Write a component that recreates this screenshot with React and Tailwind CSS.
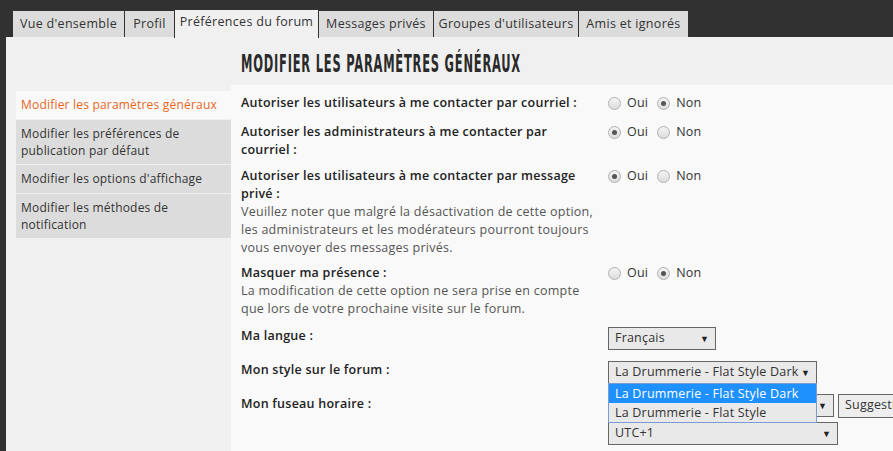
import React from 'react';

const tabs = [
	{ label: "Vue d'ensemble", w: 'w-[113px]' },
	{ label: 'Profil', w: 'w-[51px]' },
	{ label: 'Préférences du forum', w: 'w-[145px]', active: true },
	{ label: 'Messages privés', w: 'w-[116px]' },
	{ label: "Groupes d'utilisateurs", w: 'w-[146px]' },
	{ label: 'Amis et ignorés', w: 'w-[111px]' },
];

const menu = [
	{ label: 'Modifier les paramètres généraux', active: true },
	{ label: 'Modifier les préférences de publication par défaut' },
	{ label: "Modifier les options d'affichage" },
	{ label: 'Modifier les méthodes de notification' },
];

const Radio = ({ checked }) => (
	<span className="w-[13px] h-[13px] rounded-full border border-[#b0b0b0] bg-gradient-to-b from-[#f4f4f4] to-[#dcdcdc] flex items-center justify-center">
		{checked && <span className="w-[5px] h-[5px] rounded-full bg-[#555]" />}
	</span>
);

const YesNo = ({ yes }) => (
	<div className="flex items-center text-[12.5px] text-[#333] tracking-[0.2px]">
		<Radio checked={yes} />
		<span className="ml-[6px] mr-[9px]">Oui</span>
		<Radio checked={!yes} />
		<span className="ml-[6px]">Non</span>
	</div>
);

const Select = ({ value, w }) => (
	<div className={`${w} h-[23px] shrink-0 border border-[#666] bg-[#e9e9e9] flex items-center justify-between pl-[6px] pr-[6px] text-[12.5px] tracking-[0.2px] text-[#333]`}>
		<span className="whitespace-nowrap">{value}</span>
		<span className="text-[9px] text-[#222]">▼</span>
	</div>
);

const Row = ({ label, desc, children, className }) => (
	<div className={`flex ${className}`}>
		<div className="w-[367px] shrink-0 pr-[10px] text-[12.5px] leading-[18px] tracking-[0.25px]">
			<div className="font-semibold text-[#222]">{label}</div>
			{desc && <div className="text-[#555]">{desc}</div>}
		</div>
		<div className="flex-1 min-w-0">{children}</div>
	</div>
);

export default function App() {
	return (
		<div className="w-[893px] h-[451px] overflow-hidden bg-[#313131] flex flex-col" style={{ fontFamily: '"Open Sans", sans-serif' }}>
			{/* Tabs */}
			<div className="flex pl-[12px] pt-[10px] h-[37px] items-end shrink-0">
				{tabs.map((t, i) => (
					<div
						key={t.label}
						className={`${t.w} flex items-center justify-center text-[12.5px] font-medium tracking-[0.3px] border border-[#333] border-b-0 ${i > 0 ? '-ml-px' : ''} ${
							t.active ? 'bg-[#f0f0f0] h-[29px] relative top-px text-[#333] pb-[3px]' : 'bg-[#dcdcdc] h-[27px] text-[#333]'
						}`}
					>
						{t.label}
					</div>
				))}
			</div>

			{/* Content */}
			<div className="ml-[6px] flex-1 bg-[#f0f0f0] flex flex-col">
				<div className="h-[48px] pl-[235px] pt-[15px] shrink-0">
					<h1
						className="inline-block origin-left scale-x-[0.53] whitespace-nowrap text-[24px] leading-[24px] font-bold text-[#2a2a2a] tracking-[1.5px]"
						style={{ fontFamily: '"DejaVu Sans Condensed", "Liberation Sans Narrow", sans-serif' }}
					>
						MODIFIER LES PARAMÈTRES GÉNÉRAUX
					</h1>
				</div>

				<div className="flex flex-1">
					{/* Sidebar */}
					<div className="ml-[10px] w-[215px] shrink-0 pt-[6px] flex flex-col gap-px">
						{menu.map((m) => (
							<div
								key={m.label}
								className={`min-h-[28px] px-[5px] pt-[5px] pb-[5px] text-[12px] leading-[17px] font-medium tracking-[0.2px] ${
									m.active ? 'bg-[#f9f9f9] text-[#e8661b]' : 'bg-[#dcdcdc] text-[#333]'
								}`}
							>
								{m.label}
							</div>
						))}
					</div>

					{/* Main panel */}
					<div className="flex-1 min-w-0 bg-[#f9f9f9] pl-[10px] pt-[9px] relative">
						<Row label="Autoriser les utilisateurs à me contacter par courriel :">
							<YesNo yes={false} />
						</Row>
						<Row className="mt-[10px]" label="Autoriser les administrateurs à me contacter par courriel :">
							<YesNo yes />
						</Row>
						<Row
							className="mt-[8px]"
							label="Autoriser les utilisateurs à me contacter par message privé :"
							desc="Veuillez noter que malgré la désactivation de cette option, les administrateurs et les modérateurs pourront toujours vous envoyer des messages privés."
						>
							<YesNo yes />
						</Row>
						<Row
							className="mt-[7px]"
							label="Masquer ma présence :"
							desc="La modification de cette option ne sera prise en compte que lors de votre prochaine visite sur le forum."
						>
							<YesNo yes={false} />
						</Row>
						<Row className="mt-[9px]" label="Ma langue :">
							<Select value="Français" w="w-[108px]" />
						</Row>
						<Row className="mt-[11px]" label="Mon style sur le forum :">
							<div className="relative">
								<Select value="La Drummerie - Flat Style Dark" w="w-[209px]" />
								<div className="absolute left-0 top-[22px] w-[209px] z-10 border border-[#7a9cd3] bg-[#e9e9e9] text-[12.5px] tracking-[0.2px] leading-[19px]">
									<div className="bg-[#1e90ff] text-white pl-[6px] whitespace-nowrap">La Drummerie - Flat Style Dark</div>
									<div className="text-[#333] pl-[6px] whitespace-nowrap">La Drummerie - Flat Style</div>
								</div>
							</div>
						</Row>
						<Row className="mt-[11px]" label="Mon fuseau horaire :">
							<div className="flex gap-[4px] -mt-px">
								<Select value="" w="w-[226px]" />
								<div className="h-[24px] border border-[#666] bg-[#eee] pl-[6px] flex items-center text-[12.5px] tracking-[0.2px] text-[#333] whitespace-nowrap">
									Suggestion
								</div>
							</div>
							<div className="mt-[4px]">
								<Select value="UTC+1" w="w-[230px]" />
							</div>
						</Row>
					</div>
				</div>
			</div>
		</div>
	);
}
